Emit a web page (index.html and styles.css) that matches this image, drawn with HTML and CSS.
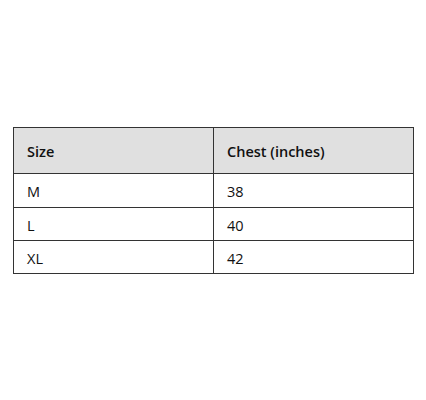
FILE: index.html
```html
<!DOCTYPE html>
<html>
<head>
<meta charset="utf-8">
<link rel="stylesheet" href="styles.css">
</head>
<body>
<div class="wrap">
<table class="sizes">
<thead>
<tr><th>Size</th><th>Chest (inches)</th></tr>
</thead>
<tbody>
<tr class="first"><td>M</td><td>38</td></tr>
<tr><td>L</td><td>40</td></tr>
<tr><td>XL</td><td>42</td></tr>
</tbody>
</table>
</div>
</body>
</html>
```
FILE: styles.css
```css
html, body { margin: 0; padding: 0; background: #fff; }
.wrap { padding: 127px 0 0 13px; }
.sizes {
  border-collapse: collapse;
  width: 401px;
  font-family: "Open Sans", sans-serif;
  font-size: 14.5px;
  color: #111;
}
.sizes th, .sizes td {
  border: 1px solid #333;
  text-align: left;
  padding: 0 13px;
  line-height: 18px;
}
.sizes th {
  background: #e0e0e0;
  font-weight: 600;
  height: 42px;
  padding-top: 3px;
}
.sizes td {
  height: 29px;
  padding-top: 3px;
}
.sizes .first td { height: 30px; }
.sizes th:first-child, .sizes td:first-child { width: 173px; }
```
